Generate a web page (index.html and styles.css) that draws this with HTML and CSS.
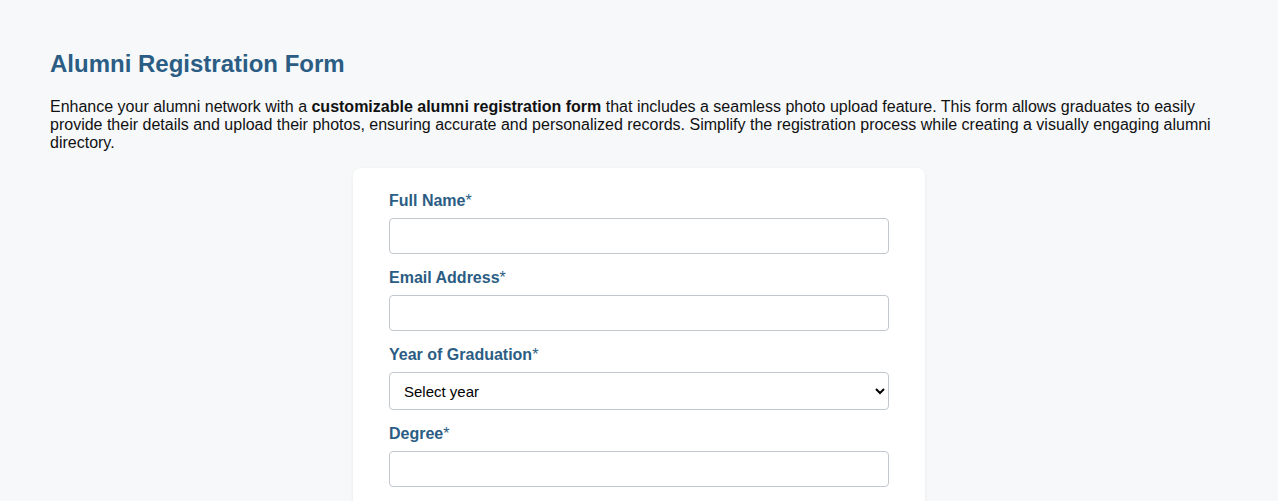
FILE: index.html
```html
<!DOCTYPE html>
<html lang="en">
<head>
<meta charset="utf-8">
<title>Alumni Registration Form</title>
<link rel="stylesheet" href="styles.css">
</head>
<body>
<main class="page">
  <h1 class="title">Alumni Registration Form</h1>
  <p class="intro">Enhance your alumni network with a <strong>customizable alumni registration form</strong> that includes a seamless photo upload feature. This form allows graduates to easily provide their details and upload their photos, ensuring accurate and personalized records. Simplify the registration process while creating a visually engaging alumni directory.</p>
  <form class="card">
    <div class="field">
      <label class="label" for="name">Full Name<span class="req">*</span></label>
      <input class="input" id="name" type="text">
    </div>
    <div class="field">
      <label class="label" for="email">Email Address<span class="req">*</span></label>
      <input class="input" id="email" type="email">
    </div>
    <div class="field">
      <label class="label" for="year">Year of Graduation<span class="req">*</span></label>
      <select class="input select" id="year">
        <option>Select year</option>
      </select>
    </div>
    <div class="field">
      <label class="label" for="degree">Degree<span class="req">*</span></label>
      <input class="input" id="degree" type="text">
    </div>
  </form>
</main>
</body>
</html>
```
FILE: styles.css
```css
html, body {
  margin: 0;
  padding: 0;
}
body {
  background: #f6f8fa;
  font-family: "Liberation Sans", Arial, sans-serif;
  color: #111;
}
.page {
  padding: 50px 50px 40px 50px;
}
.title {
  margin: 0;
  font-size: 24px;
  line-height: 28px;
  font-weight: bold;
  color: #2b5d84;
}
.intro {
  margin: 20px 0 16px 0;
  font-size: 16px;
  line-height: 18px;
}
.card {
  width: 500px;
  margin: 0 auto;
  background: #fff;
  border-radius: 8px;
  padding: 24px 36px 30px 36px;
  box-shadow: 0 1px 4px rgba(0, 0, 0, 0.06);
}
.field {
  margin-bottom: 15px;
}
.label {
  display: block;
  font-size: 16px;
  line-height: 18px;
  font-weight: bold;
  color: #2b5d84;
  margin-bottom: 8px;
}
.req {
  font-weight: normal;
  color: #2b5d84;
}
.input {
  display: block;
  box-sizing: border-box;
  width: 100%;
  height: 36px;
  border: 1px solid #c3c8cf;
  border-radius: 4px;
  background: #fff;
  font-family: "Liberation Sans", Arial, sans-serif;
  font-size: 15px;
  padding: 0 10px;
  margin: 0;
}
.select {
  height: 38px;
  padding: 0 10px;
  color: #000;
}
```
